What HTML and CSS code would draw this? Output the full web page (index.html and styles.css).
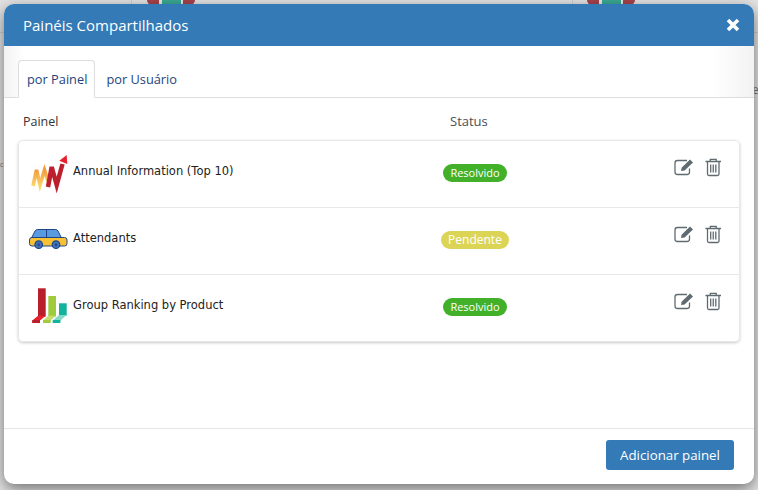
FILE: index.html
```html
<!DOCTYPE html>
<html lang="pt">
<head>
<meta charset="utf-8">
<title>Painéis Compartilhados</title>
<link rel="stylesheet" href="styles.css">
</head>
<body>
<div class="backdrop" aria-hidden="true">
  <div class="bg-line bg-line-a"></div>
  <div class="bg-line bg-line-b"></div>
  <div class="bg-line bg-line-c"></div>
  <div class="bg-logo bg-logo-a"></div>
  <div class="bg-logo bg-logo-b"></div>
  <span class="bg-char bg-char-a">e</span>
  <span class="bg-char bg-char-b">c</span>
</div>
<div class="modal">
  <header class="modal-header">
    <h1 class="modal-title">Painéis Compartilhados</h1>
    <svg class="close" viewBox="0 0 14 14" width="14" height="14"><path d="M2 2l10 10M12 2L2 12" stroke="#fff" stroke-width="3.6"/></svg>
  </header>
  <nav class="tabs">
    <a class="tab tab-active">por Painel</a>
    <a class="tab">por Usuário</a>
  </nav>
  <div class="columns">
    <span class="col-name">Painel</span>
    <span class="col-status">Status</span>
  </div>
  <section class="card">
    <div class="row">
      <svg class="thumb" viewBox="0 0 40 40" width="40" height="40">
        <defs><linearGradient id="flame" x1="0" y1="1" x2="0" y2="0"><stop offset="0" stop-color="#fbd76a"/><stop offset="1" stop-color="#f59a3c"/></linearGradient></defs>
        <path d="M5 33L8.500 17 12 32 16.500 17 20 28" fill="none" stroke="url(#flame)" stroke-width="3.600"/>
        <path d="M20 34L23.700 14 28.700 32 34.500 11" fill="none" stroke="#bd1f2d" stroke-width="4.500"/>
        <path d="M38.700 2L31.300 7.700 39.300 11z" fill="#e8212e"/>
      </svg>
      <span class="name">Annual Information (Top 10)</span>
      <span class="status"><span class="badge badge-ok">Resolvido</span></span>
      <span class="actions">
        <svg class="icon" viewBox="0 0 21 20" width="21" height="20"><path d="M16.500 11.500V15a2.500 2.500 0 0 1-2.500 2.500H4.500A2.500 2.500 0 0 1 2 15V6A2.500 2.500 0 0 1 4.500 3.500H14" fill="none" stroke="#5f6b70" stroke-width="1.300"/><path d="M8 14l.6-3.200L17 2.600l3 2.900-8.400 8z" fill="#5f6b70"/></svg>
        <svg class="icon" viewBox="0 0 18 20" width="18" height="20"><path d="M1.500 4.500H17M6.300 4.500V2.300h5.900v2.200M3.500 4.500V17a1.500 1.500 0 0 0 1.500 1.500h8.500A1.500 1.500 0 0 0 15 17V4.500M6.700 7.500v8M9.250 7.500v8M11.800 7.500v8" fill="none" stroke="#5f6b70" stroke-width="1.300"/></svg>
      </span>
    </div>
    <div class="row">
      <svg class="thumb" viewBox="0 0 40 40" width="40" height="40">
        <path d="M3.500 18l3.500-7a3 3 0 0 1 2.500-1.500h18a3 3 0 0 1 2.500 1.500l3.500 7z" fill="#5a9be0" stroke="#1f4788" stroke-width="1"/>
        <path d="M18.500 9.500V18" stroke="#1f4788" stroke-width="1"/>
        <rect x="1.500" y="17.500" width="37.500" height="8.500" rx="2.500" fill="#f9c235" stroke="#1f4788" stroke-width="1"/>
        <circle cx="10.700" cy="24.700" r="3.800" fill="#3f6fb5" stroke="#1f4788" stroke-width="1.200"/>
        <circle cx="28" cy="24.700" r="3.800" fill="#3f6fb5" stroke="#1f4788" stroke-width="1.200"/>
        <circle cx="10.700" cy="24.700" r="1.200" fill="#1f4788"/>
        <circle cx="28" cy="24.700" r="1.200" fill="#1f4788"/>
      </svg>
      <span class="name">Attendants</span>
      <span class="status"><span class="badge badge-wait">Pendente</span></span>
      <span class="actions">
        <svg class="icon" viewBox="0 0 21 20" width="21" height="20"><path d="M16.500 11.500V15a2.500 2.500 0 0 1-2.500 2.500H4.500A2.500 2.500 0 0 1 2 15V6A2.500 2.500 0 0 1 4.500 3.500H14" fill="none" stroke="#5f6b70" stroke-width="1.300"/><path d="M8 14l.6-3.200L17 2.600l3 2.900-8.400 8z" fill="#5f6b70"/></svg>
        <svg class="icon" viewBox="0 0 18 20" width="18" height="20"><path d="M1.500 4.500H17M6.300 4.500V2.300h5.900v2.200M3.500 4.500V17a1.500 1.500 0 0 0 1.500 1.500h8.500A1.500 1.500 0 0 0 15 17V4.500M6.700 7.500v8M9.250 7.500v8M11.800 7.500v8" fill="none" stroke="#5f6b70" stroke-width="1.300"/></svg>
      </span>
    </div>
    <div class="row">
      <svg class="thumb" viewBox="0 0 40 40" width="40" height="40">
        <rect x="10" y="1.300" width="7.700" height="28.400" fill="#b81e2c"/>
        <path d="M10 28.700h7.700L12 33.500v2.500H4.300v-2.500z" fill="#e8212e"/>
        <rect x="4.300" y="33" width="7.700" height="3" fill="#b81e2c"/>
        <rect x="20.300" y="9" width="7.700" height="20.700" fill="#9fcb3c"/>
        <path d="M20.300 28.700H28L22.700 33.500H15z" fill="#c3dd6e"/>
        <rect x="15" y="33" width="7.700" height="3" fill="#9fcb3c"/>
        <rect x="31" y="16.300" width="7.700" height="12.400" fill="#12b39c"/>
        <path d="M31 28h7.700L32.400 33.500h-7.700z" fill="#85d9cb"/>
        <rect x="24.700" y="33" width="7.700" height="3" fill="#12b39c"/>
      </svg>
      <span class="name">Group Ranking by Product</span>
      <span class="status"><span class="badge badge-ok">Resolvido</span></span>
      <span class="actions">
        <svg class="icon" viewBox="0 0 21 20" width="21" height="20"><path d="M16.500 11.500V15a2.500 2.500 0 0 1-2.500 2.500H4.500A2.500 2.500 0 0 1 2 15V6A2.500 2.500 0 0 1 4.500 3.500H14" fill="none" stroke="#5f6b70" stroke-width="1.300"/><path d="M8 14l.6-3.200L17 2.600l3 2.900-8.400 8z" fill="#5f6b70"/></svg>
        <svg class="icon" viewBox="0 0 18 20" width="18" height="20"><path d="M1.500 4.500H17M6.300 4.500V2.300h5.900v2.200M3.500 4.500V17a1.500 1.500 0 0 0 1.500 1.500h8.500A1.500 1.500 0 0 0 15 17V4.500M6.700 7.500v8M9.250 7.500v8M11.800 7.500v8" fill="none" stroke="#5f6b70" stroke-width="1.300"/></svg>
      </span>
    </div>
  </section>
  <footer class="modal-footer">
    <button class="add">Adicionar painel</button>
  </footer>
</div>
</body>
</html>
```

FILE: styles.css
```css
* { box-sizing: border-box; }
html, body { margin: 0; height: 490px; overflow: hidden; }
body {
  background: #e3e3e3;
  padding: 4px;
  font-family: "Open Sans", "Liberation Sans", sans-serif;
}
.backdrop { position: absolute; inset: 0; overflow: hidden; }
.bg-line { position: absolute; background: #cfcfcf; }
.bg-line-a { left: 0; right: 0; top: 32px; height: 1px; }
.bg-line-b { left: 131px; top: 0; width: 1px; height: 32px; }
.bg-line-c { left: 572px; top: 0; width: 1px; height: 32px; }
.bg-logo {
  position: absolute; top: 0; width: 48px; height: 5px;
  border-radius: 0 0 16px 16px;
  background: linear-gradient(90deg, #a8424a 0 24%, #e8e8e8 24% 32%, #3aa993 32% 70%, #e8e8e8 70% 76%, #a8424a 76%);
}
.bg-logo-a { left: 147px; }
.bg-logo-b { left: 587px; }
.bg-char { position: absolute; line-height: 14px; color: #777; }
.bg-char-a { left: 752px; top: 83px; font-size: 12px; }
.bg-char-b { left: 0; top: 158px; font-size: 7px; }

.modal {
  position: relative;
  width: 750px;
  height: 480px;
  background: #fff;
  border-radius: 10px;
  box-shadow: 0 5px 15px rgba(0, 0, 0, .5);
  display: flex;
  flex-direction: column;
  overflow: hidden;
}
.modal-header {
  flex: none;
  height: 42px;
  background: #337ab7;
  display: flex;
  align-items: center;
  justify-content: space-between;
  padding: 0 14px 0 19px;
}
.modal-title { margin: 0; font-size: 15px; font-weight: 400; color: #fff; }
.tabs {
  flex: none;
  height: 52px;
  padding: 14px 14px 0;
  display: flex;
  border-bottom: 1px solid #ddd;
  background: linear-gradient(90deg, #f2f2f2 0, #fff 20px, #fff calc(100% - 40px), #f2f2f2 100%);
}
.tab {
  height: 38px;
  padding: 0 7px 0 8px;
  font-size: 12.800px;
  line-height: 36px;
  color: #23457d;
  border: 1px solid transparent;
  border-radius: 4px 4px 0 0;
}
.tab-active { background: #fff; border-color: #ddd #ddd #fff; }
.tab + .tab { margin-left: 1px; padding-left: 9px; }
.columns {
  flex: none;
  height: 42px;
  padding: 14px 0 0 19px;
  display: flex;
  align-items: baseline;
  font-size: 13px;
  line-height: 18px;
  color: #333;
}
.col-name { width: 427px; font-size: 12.500px; }
.col-status { color: #4a4f55; }
.card {
  flex: none;
  margin: 0 14px;
  height: 202px;
  border: 1px solid #e8e8e8;
  border-radius: 5px;
  box-shadow: 0 1px 3px rgba(0, 0, 0, .22);
  display: flex;
  flex-direction: column;
}
.row {
  flex: 1;
  display: flex;
  align-items: flex-start;
  padding: 10px 17px 0 9px;
}
.row + .row { border-top: 1px solid #e8e8e8; }
.thumb { flex: none; margin-top: 2px; }
.name {
  width: 368px;
  margin-left: 5px;
  font-family: "DejaVu Sans", sans-serif;
  font-size: 11.500px;
  line-height: 16px;
  margin-top: 12px;
  color: #222;
}
.status { width: 68px; margin-top: 13px; display: flex; justify-content: center; }
.badge {
  padding: 0 7px;
  height: 18px;
  line-height: 18px;
  font-size: 12px;
  color: #fff;
  border-radius: 9px;
}
.badge-ok { background: #43b02a; font-size: 11px; }
.badge-wait { background: #dcd455; }
.actions { display: flex; gap: 10px; margin: 6px 0 0 auto; align-items: flex-start; }
.modal-footer {
  margin-top: auto;
  flex: none;
  height: 56px;
  border-top: 1px solid #e5e5e5;
  padding: 11px 20px 0 0;
  display: flex;
  justify-content: flex-end;
  align-items: flex-start;
}
.add {
  width: 128px;
  height: 30px;
  border: 0;
  border-radius: 3px;
  background: #337ab7;
  color: #fff;
  font: 13.300px "Open Sans", "Liberation Sans", sans-serif;
  padding: 0;
}
```
